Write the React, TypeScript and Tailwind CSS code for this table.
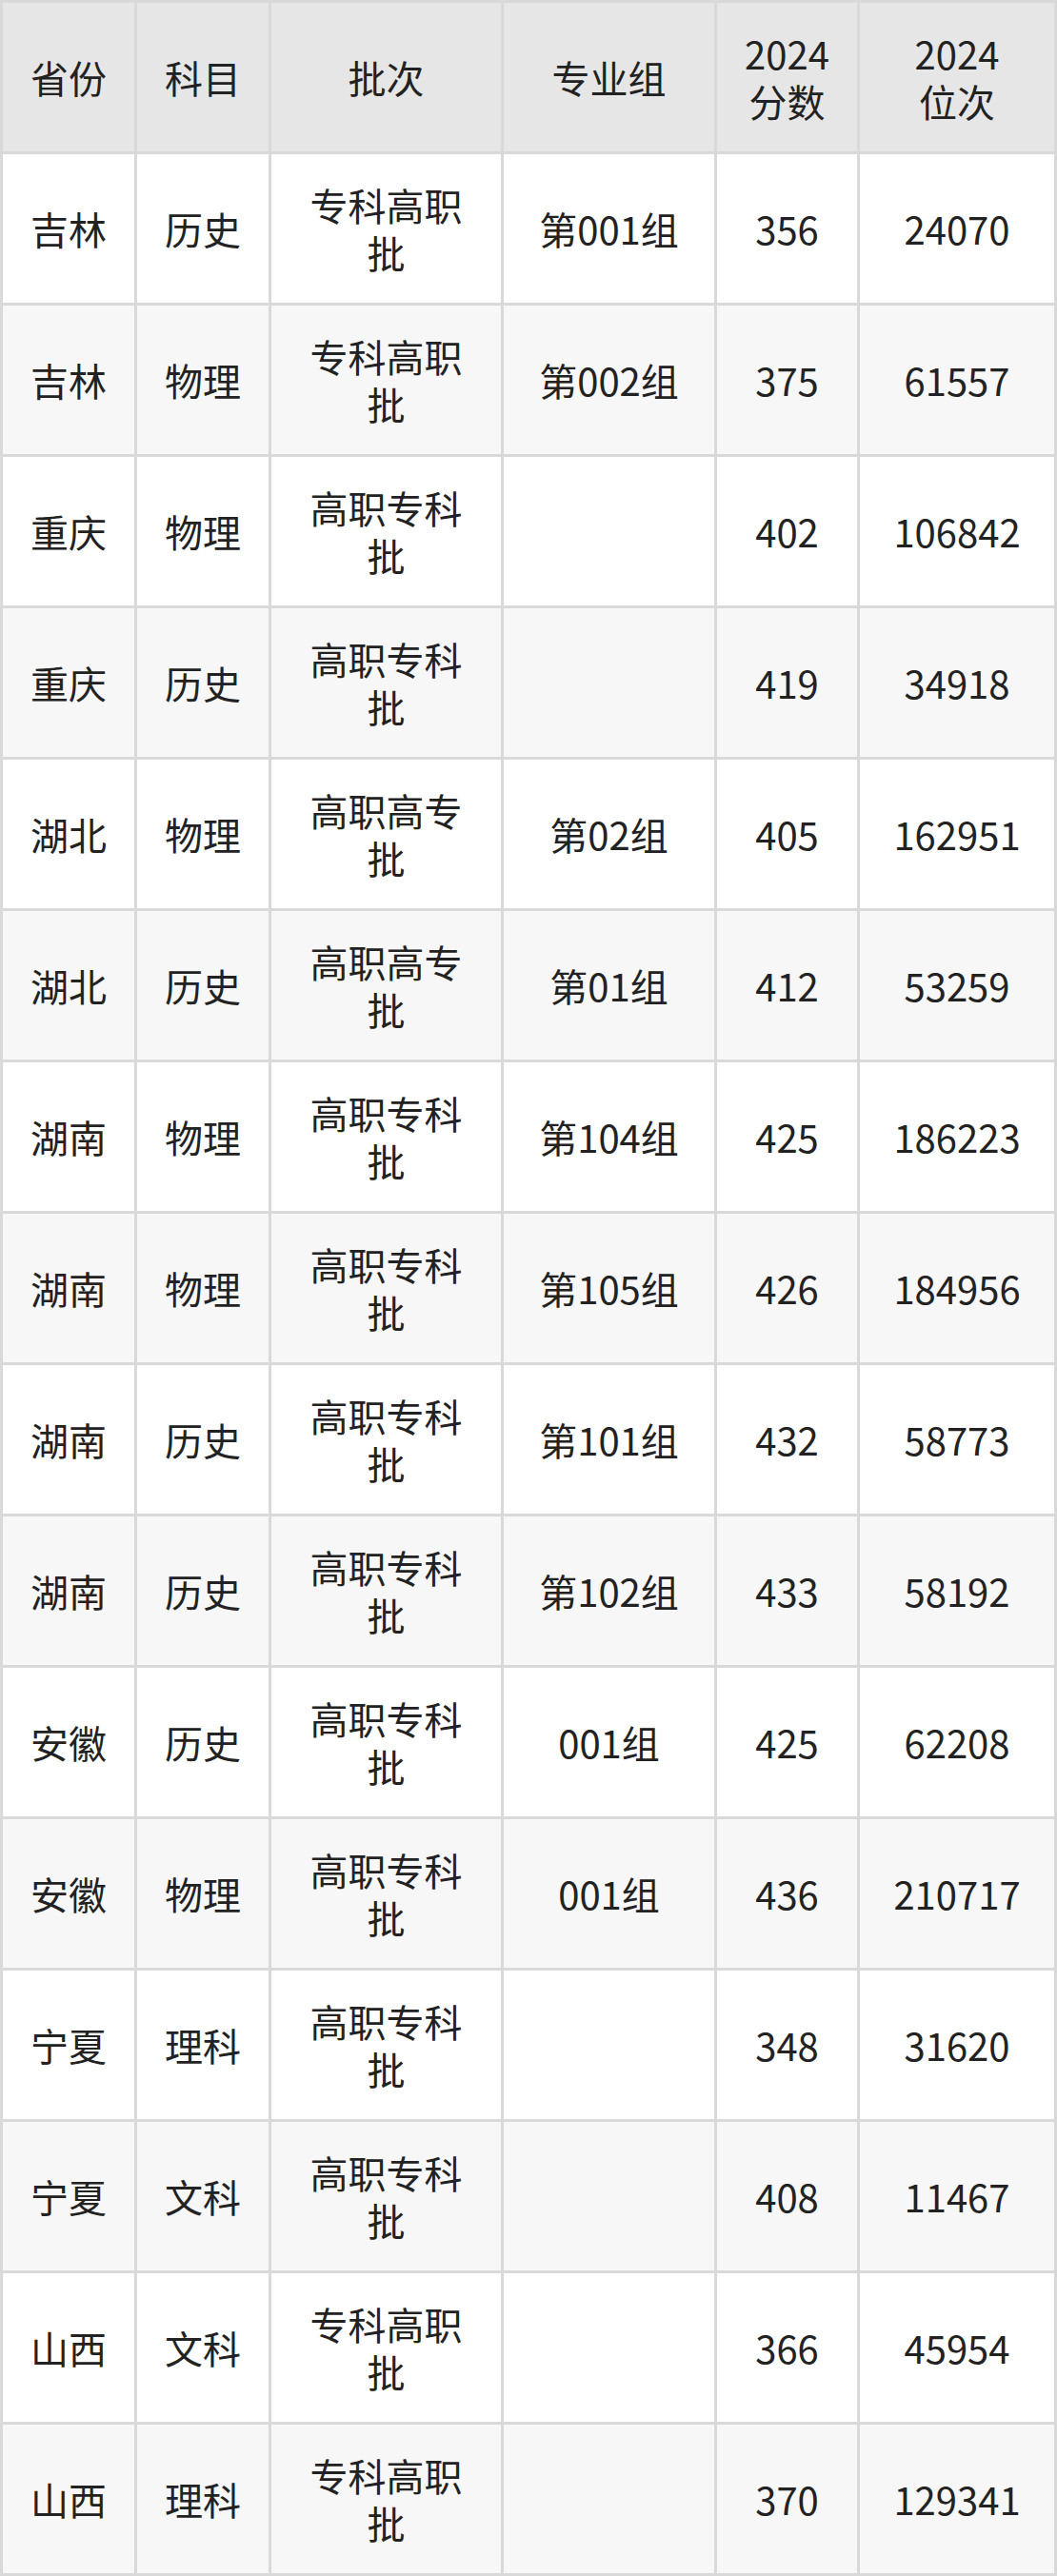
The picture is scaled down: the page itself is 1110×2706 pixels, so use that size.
import React from "react";

const rows: string[][] = [
  ["吉林", "历史", "专科高职批", "第001组", "356", "24070"],
  ["吉林", "物理", "专科高职批", "第002组", "375", "61557"],
  ["重庆", "物理", "高职专科批", "", "402", "106842"],
  ["重庆", "历史", "高职专科批", "", "419", "34918"],
  ["湖北", "物理", "高职高专批", "第02组", "405", "162951"],
  ["湖北", "历史", "高职高专批", "第01组", "412", "53259"],
  ["湖南", "物理", "高职专科批", "第104组", "425", "186223"],
  ["湖南", "物理", "高职专科批", "第105组", "426", "184956"],
  ["湖南", "历史", "高职专科批", "第101组", "432", "58773"],
  ["湖南", "历史", "高职专科批", "第102组", "433", "58192"],
  ["安徽", "历史", "高职专科批", "001组", "425", "62208"],
  ["安徽", "物理", "高职专科批", "001组", "436", "210717"],
  ["宁夏", "理科", "高职专科批", "", "348", "31620"],
  ["宁夏", "文科", "高职专科批", "", "408", "11467"],
  ["山西", "文科", "专科高职批", "", "366", "45954"],
  ["山西", "理科", "专科高职批", "", "370", "129341"],
];

const headers = ["省份", "科目", "批次", "专业组", "2024\n分数", "2024\n位次"];

function Cell({ text, bg }: { text: string; bg: string }) {
  const lines = text.split("\n");
  const isBatch = text.length === 5 && !/\d/.test(text);
  return (
    <div className={`${bg} flex items-center justify-center text-center text-[40px] leading-[50px] text-[#222222] px-2`}>
      {isBatch ? (
        <div className="w-[160px] break-all">{text}</div>
      ) : (
        <div>
          {lines.map((l, i) => (
            <div key={i}>{l}</div>
          ))}
        </div>
      )}
    </div>
  );
}

export default function App() {
  return (
    <div
      className="w-[1110px] bg-[#d9d9d9] p-[3px]"
      style={{ fontFamily: '"Noto Sans CJK SC", "Noto Sans", sans-serif' }}
    >
      <div className="grid grid-cols-[138px_138px_241px_221px_147px_204px] gap-[3px] auto-rows-[156px]">
        {headers.map((h, i) => (
          <Cell key={"h" + i} text={h} bg="bg-[#e6e6e6]" />
        ))}
        {rows.map((r, ri) =>
          r.map((c, ci) => (
            <Cell
              key={ri + "-" + ci}
              text={c}
              bg={ri % 2 === 0 ? "bg-white" : "bg-[#f7f7f7]"}
            />
          ))
        )}
      </div>
    </div>
  );
}
